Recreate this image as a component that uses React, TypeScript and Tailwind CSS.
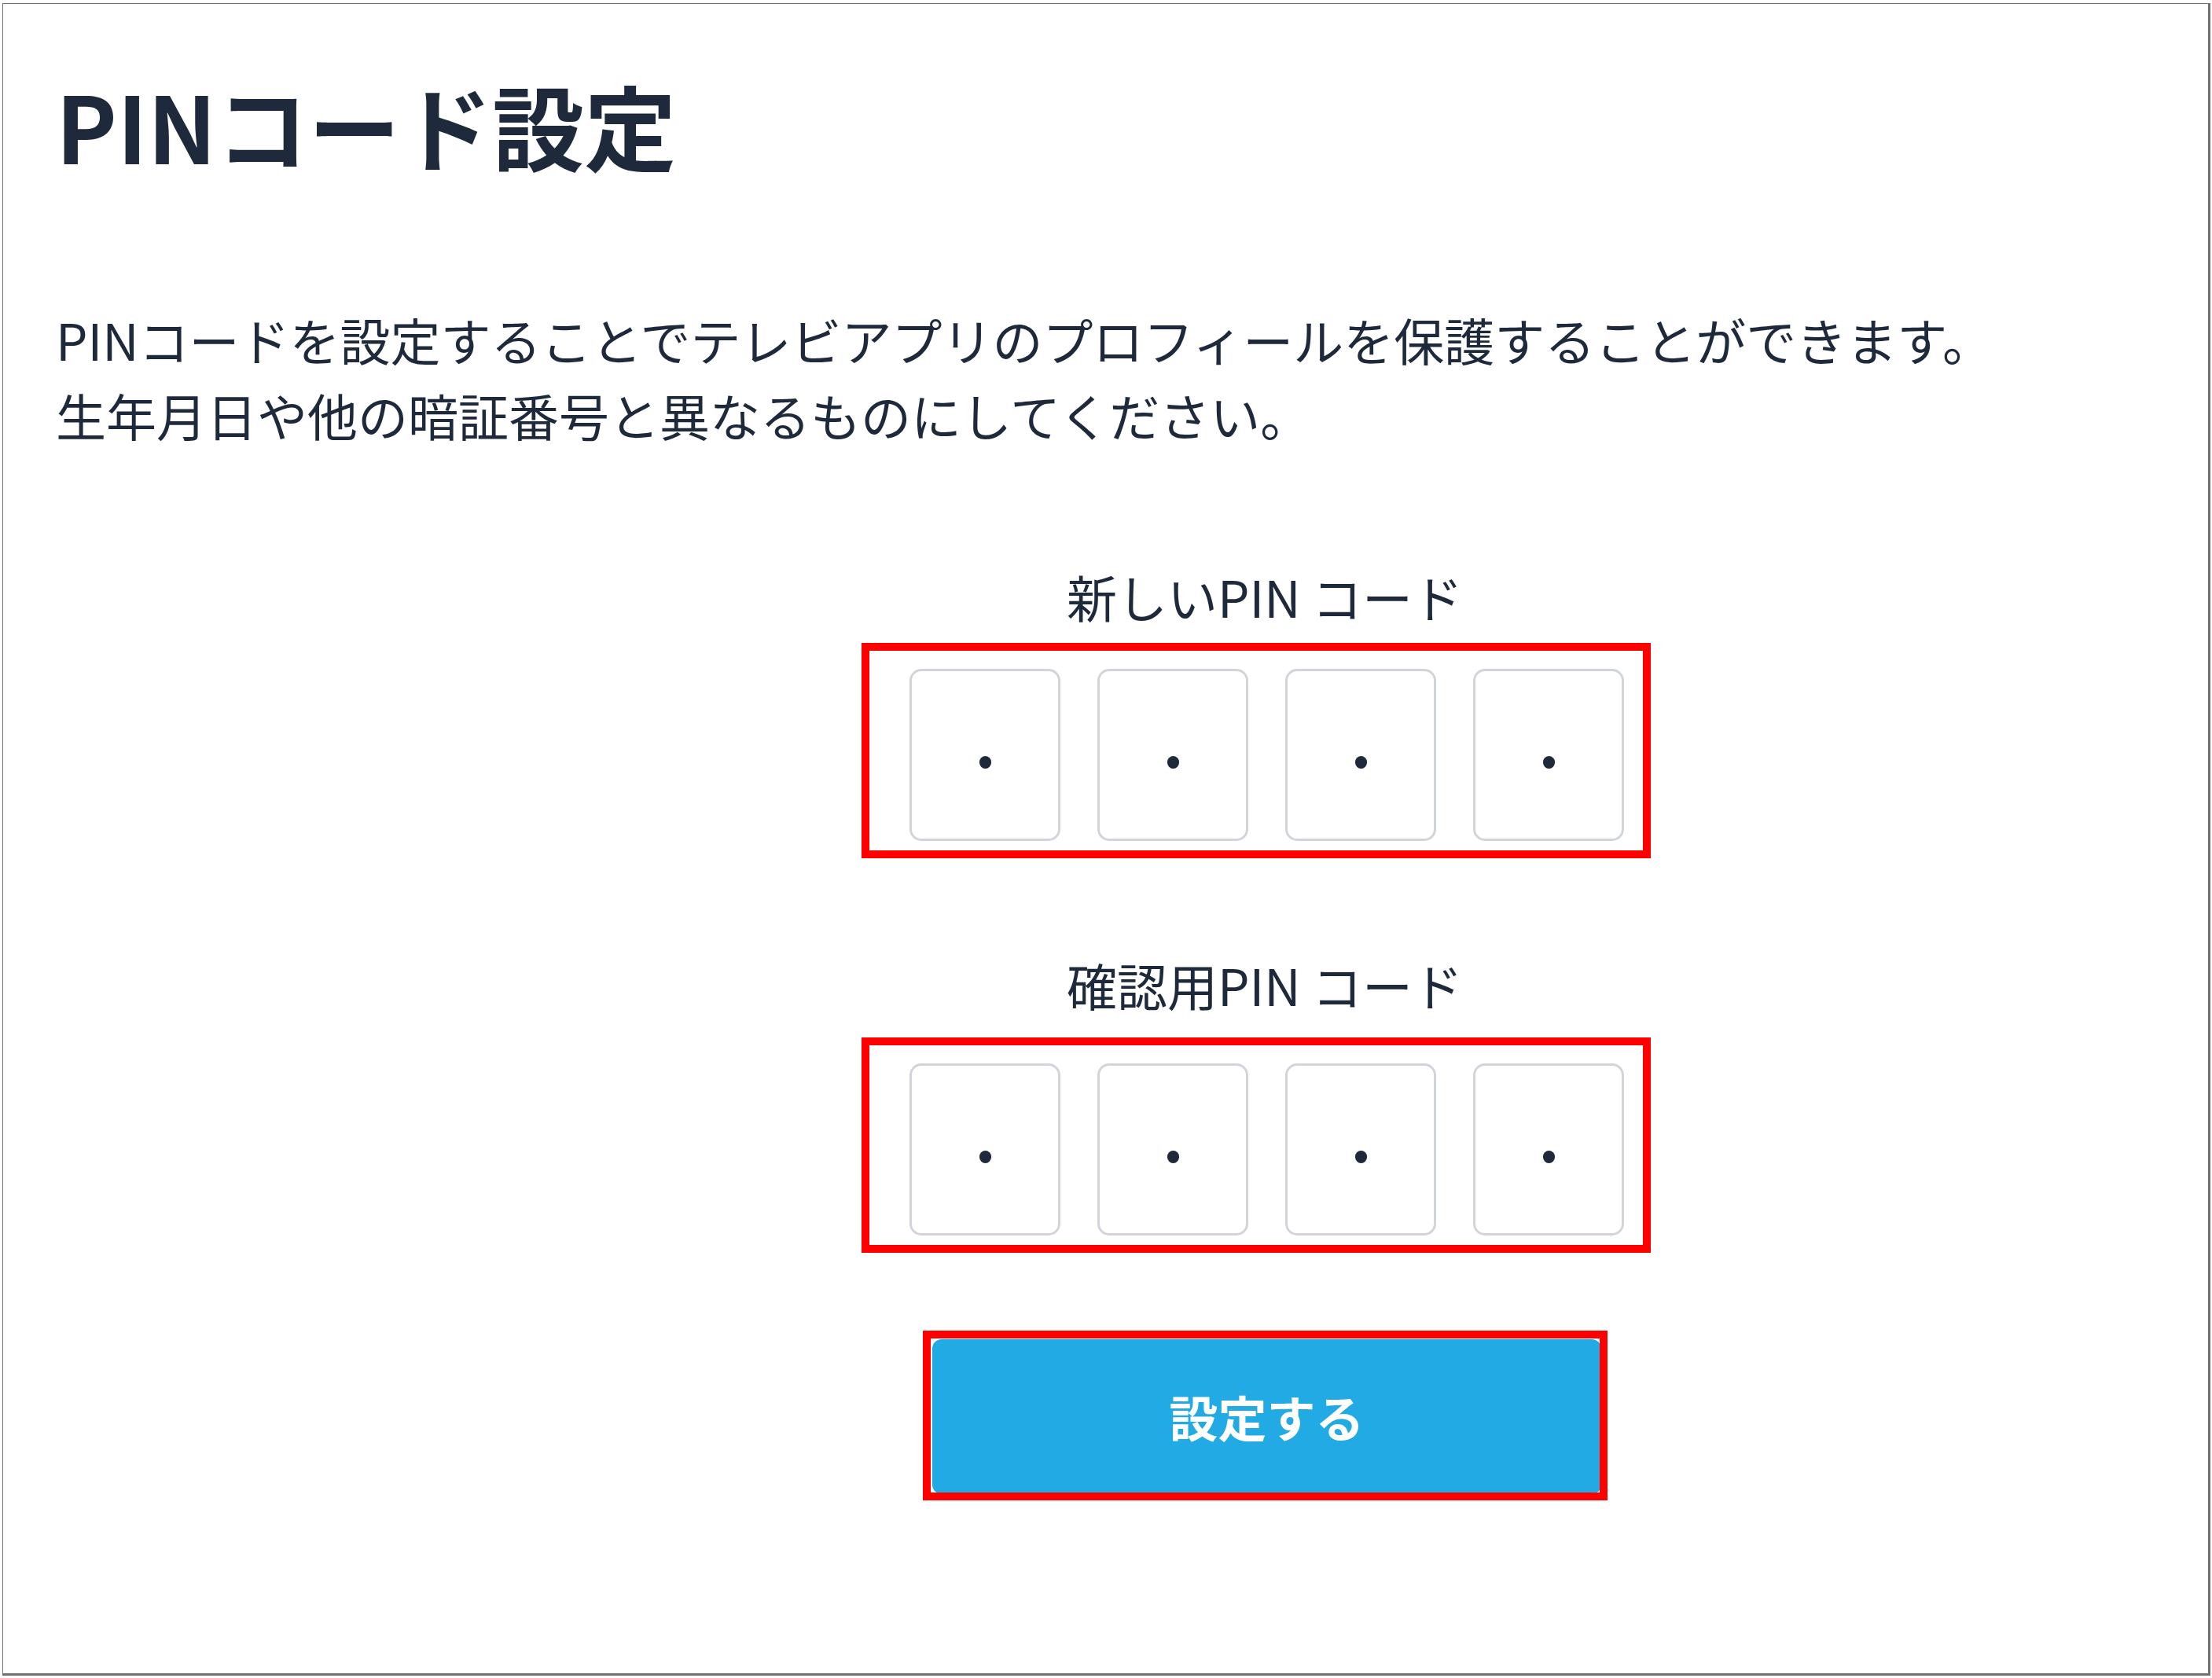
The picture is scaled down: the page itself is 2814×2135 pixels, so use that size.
import React from 'react';

// one PIN digit cell, masked with a centre dot
function PinCell() {
  return (
    <div className="w-[192px] h-[219px] rounded-[15px] border-[3px] border-[#d1d5db] bg-white flex items-center justify-center">
      <div className="w-[15px] h-[16px] rounded-full bg-[#1e2a3b] mt-[18px]" />
    </div>
  );
}

function PinRow() {
  return (
    <div className="w-[1004px] h-[274px] border-[10px] border-[#ff0000] pl-[51px] pt-[23px]">
      <div className="flex gap-[47px]">
        <PinCell />
        <PinCell />
        <PinCell />
        <PinCell />
      </div>
    </div>
  );
}

function FieldLabel({ children }: { children: React.ReactNode }) {
  return (
    <div className="w-[1004px] pl-[22px] text-center text-[64px] leading-[93px] text-[#1e2a3b]">
      {children}
    </div>
  );
}

export default function App() {
  return (
    <div className="w-[2814px] h-[2135px] bg-white font-['Noto_Sans_CJK_JP',sans-serif]">
      <div className="ml-[3px] pt-[4px]">
        <div className="w-[2809px] h-[2128px] border-t border-l border-r-[3px] border-b-[3px] border-[#707070] bg-white">
          <h1 className="pl-[67px] pt-[95px] text-[117px] leading-[117px] font-bold text-[#1e2a3b]">
            PINコード設定
          </h1>

          <p className="pl-[67px] mt-[166px] text-[64px] leading-[96px] text-[#1e2a3b]">
            PINコードを設定することでテレビアプリのプロフィールを保護することができます。
            <br />
            生年月日や他の暗証番号と異なるものにしてください。
          </p>

          <div className="ml-[1092px] mt-[137px] flex flex-col">
            <FieldLabel>新しいPIN コード</FieldLabel>
            <div className="mt-[13px]">
              <PinRow />
            </div>

            <div className="mt-[114px]">
              <FieldLabel>確認用PIN コード</FieldLabel>
            </div>
            <div className="mt-[21px]">
              <PinRow />
            </div>

            <div className="mt-[99px] ml-[78px] w-[871px] h-[216px] border-[10px] border-[#ff0000] overflow-hidden">
              <button className="ml-[2px] mt-[1px] w-[851px] h-[197px] rounded-[12px] bg-[#21aae4] text-white text-[62px] font-bold flex items-center justify-center">
                設定する
              </button>
            </div>
          </div>
        </div>
      </div>
    </div>
  );
}
